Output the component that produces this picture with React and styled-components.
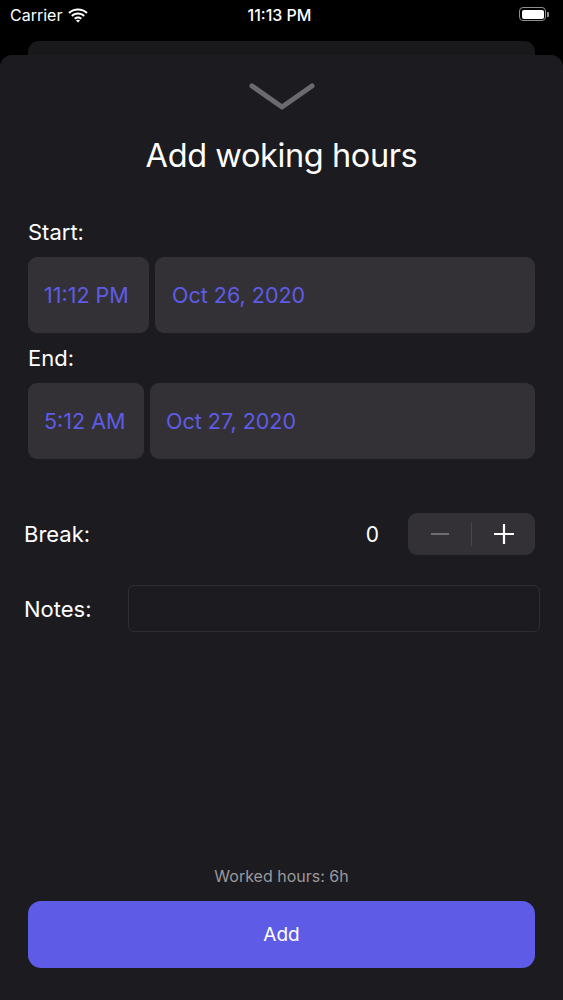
import React, { useState } from 'react';
import styled, { createGlobalStyle } from 'styled-components';

const GlobalStyle = createGlobalStyle`
  html, body {
    margin: 0;
    padding: 0;
    background: #000;
  }
  * { box-sizing: border-box; }
`;

const Screen = styled.div`
  height: 100vh;
  display: flex;
  flex-direction: column;
  background: #000;
  font-family: Inter, Roboto, "Liberation Sans", sans-serif;
  color: #fff;
  overflow: hidden;
`;

const StatusBar = styled.div`
  height: 41px;
  display: grid;
  grid-template-columns: 1fr auto 1fr;
  align-items: start;
  padding: 5px 14px 0 10px;
  font-size: 16px;
  font-weight: 500;
`;

const Carrier = styled.div`
  display: flex;
  align-items: center;
  gap: 6px;
  font-weight: 400;
`;

const Clock = styled.div`
  font-weight: 500;
`;

const Battery = styled.div`
  justify-self: end;
  display: flex;
  align-items: center;
  margin-top: 2px;
`;

const BatteryBody = styled.div`
  width: 27px;
  height: 14px;
  border: 1.5px solid #8e8e93;
  border-radius: 4px;
  padding: 1.5px;
  div {
    width: 100%;
    height: 100%;
    background: #fff;
    border-radius: 2px;
  }
`;

const BatteryTip = styled.div`
  width: 2px;
  height: 5px;
  margin-left: 1px;
  background: #8e8e93;
  border-radius: 0 1px 1px 0;
`;

const BackCard = styled.div`
  height: 14px;
  margin: 0 28px;
  background: #19191b;
  border-radius: 11px 11px 0 0;
`;

const Sheet = styled.div`
  flex: 1;
  display: flex;
  flex-direction: column;
  background: #1c1b1f;
  border-radius: 12px 12px 0 0;
  padding: 28px 28px 32px;
`;

const Grabber = styled.div`
  display: flex;
  justify-content: center;
`;

const Title = styled.h1`
  margin: 25px 0 0;
  text-align: center;
  font-size: 32.5px;
  font-weight: 400;
  letter-spacing: -0.4px;
  line-height: 40px;
`;

const Label = styled.div`
  font-size: 22px;
  line-height: 26px;
`;

const Section = styled.div`
  display: flex;
  flex-direction: column;
  gap: 12px;
  margin-top: ${p => p.$top}px;
`;

const PickerRow = styled.div`
  display: flex;
  gap: 6px;
  height: 76px;
`;

const PickerBox = styled.div`
  flex: ${p => (p.$grow ? 1 : '0 0 auto')};
  width: ${p => (p.$w ? `${p.$w}px` : 'auto')};
  display: flex;
  align-items: center;
  padding-left: ${p => p.$pad}px;
  background: #333136;
  border-radius: 9px;
  color: #5e5ce6;
  font-size: 21.5px;
  white-space: nowrap;
`;

const BreakRow = styled.div`
  display: flex;
  align-items: center;
  margin: 54px 0 0 -4px;
  height: 42px;
`;

const Value = styled.div`
  margin-left: auto;
  margin-right: 29px;
  font-size: 21px;
`;

const Stepper = styled.div`
  width: 127px;
  height: 42px;
  display: flex;
  align-items: center;
  background: #333136;
  border-radius: 9px;
`;

const StepButton = styled.button`
  flex: 1;
  height: 100%;
  display: flex;
  align-items: center;
  justify-content: center;
  background: none;
  border: 0;
  padding: 0;
  cursor: pointer;
`;

const StepDivider = styled.div`
  width: 1px;
  height: 24px;
  background: #48464c;
`;

const NotesRow = styled.div`
  display: flex;
  align-items: center;
  margin: 30px -5px 0 -4px;
`;

const NotesInput = styled.input`
  margin-left: auto;
  width: 412px;
  height: 47px;
  background: transparent;
  border: 1px solid #2f2e33;
  border-radius: 6px;
  color: #fff;
  font-size: 18px;
  padding: 0 10px;
  outline: none;
`;

const Footer = styled.div`
  margin-top: auto;
  display: flex;
  flex-direction: column;
  gap: 15px;
`;

const Worked = styled.div`
  text-align: center;
  font-size: 16px;
  color: #9a999e;
  line-height: 20px;
`;

const AddButton = styled.button`
  height: 67px;
  border: 0;
  border-radius: 13px;
  background: #5e5ce6;
  color: #fff;
  font-family: inherit;
  font-size: 19px;
  cursor: pointer;
`;

const Wifi = () => (
  <svg width="20" height="15" viewBox="0 0 20 15" fill="#fff">
    <path d="M10 2.5c3.2 0 6.1 1.2 8.3 3.2l1.4-1.5C17.1 1.8 13.7.4 10 .4S2.9 1.8.3 4.2l1.4 1.5C3.9 3.7 6.8 2.5 10 2.5z" />
    <path d="M10 6.6c2.1 0 4 .8 5.4 2.1l1.4-1.5C15 5.6 12.6 4.6 10 4.6S5 5.6 3.2 7.2l1.4 1.5C6 7.4 7.9 6.6 10 6.6z" />
    <path d="M10 10.6c1 0 1.9.4 2.6 1l1.4-1.5c-1.1-.9-2.5-1.5-4-1.5s-2.9.6-4 1.5l1.4 1.5c.7-.6 1.6-1 2.6-1z" />
    <path d="M10 14.6l2-2.1c-.5-.5-1.2-.8-2-.8s-1.5.3-2 .8z" />
  </svg>
);

const Chevron = () => (
  <svg width="66" height="28" viewBox="0 0 66 28">
    <path d="M3 3 L33 24 L63 3" fill="none" stroke="#6b6a6f" strokeWidth="5" strokeLinecap="round" strokeLinejoin="round" />
  </svg>
);

const Minus = () => (
  <svg width="20" height="20" viewBox="0 0 20 20">
    <path d="M1 10 H19" stroke="#6e6d72" strokeWidth="2" />
  </svg>
);

const Plus = () => (
  <svg width="22" height="22" viewBox="0 0 22 22">
    <path d="M1 11 H21 M11 1 V21" stroke="#fff" strokeWidth="2.2" />
  </svg>
);

export default function App() {
  const [breakMins, setBreakMins] = useState(0);

  return (
    <Screen>
      <GlobalStyle />
      <StatusBar>
        <Carrier>
          Carrier <Wifi />
        </Carrier>
        <Clock>11:13 PM</Clock>
        <Battery>
          <BatteryBody>
            <div />
          </BatteryBody>
          <BatteryTip />
        </Battery>
      </StatusBar>
      <BackCard />
      <Sheet>
        <Grabber>
          <Chevron />
        </Grabber>
        <Title>Add woking hours</Title>

        <Section $top={43}>
          <Label>Start:</Label>
          <PickerRow>
            <PickerBox $w={121} $pad={16}>11:12 PM</PickerBox>
            <PickerBox $grow $pad={17}>Oct 26, 2020</PickerBox>
          </PickerRow>
        </Section>

        <Section $top={12}>
          <Label>End:</Label>
          <PickerRow>
            <PickerBox $w={116} $pad={16}>5:12 AM</PickerBox>
            <PickerBox $grow $pad={16}>Oct 27, 2020</PickerBox>
          </PickerRow>
        </Section>

        <BreakRow>
          <Label>Break:</Label>
          <Value>{breakMins}</Value>
          <Stepper>
            <StepButton onClick={() => setBreakMins(Math.max(0, breakMins - 1))}>
              <Minus />
            </StepButton>
            <StepDivider />
            <StepButton onClick={() => setBreakMins(breakMins + 1)}>
              <Plus />
            </StepButton>
          </Stepper>
        </BreakRow>

        <NotesRow>
          <Label>Notes:</Label>
          <NotesInput />
        </NotesRow>

        <Footer>
          <Worked>Worked hours: 6h</Worked>
          <AddButton>Add</AddButton>
        </Footer>
      </Sheet>
    </Screen>
  );
}
